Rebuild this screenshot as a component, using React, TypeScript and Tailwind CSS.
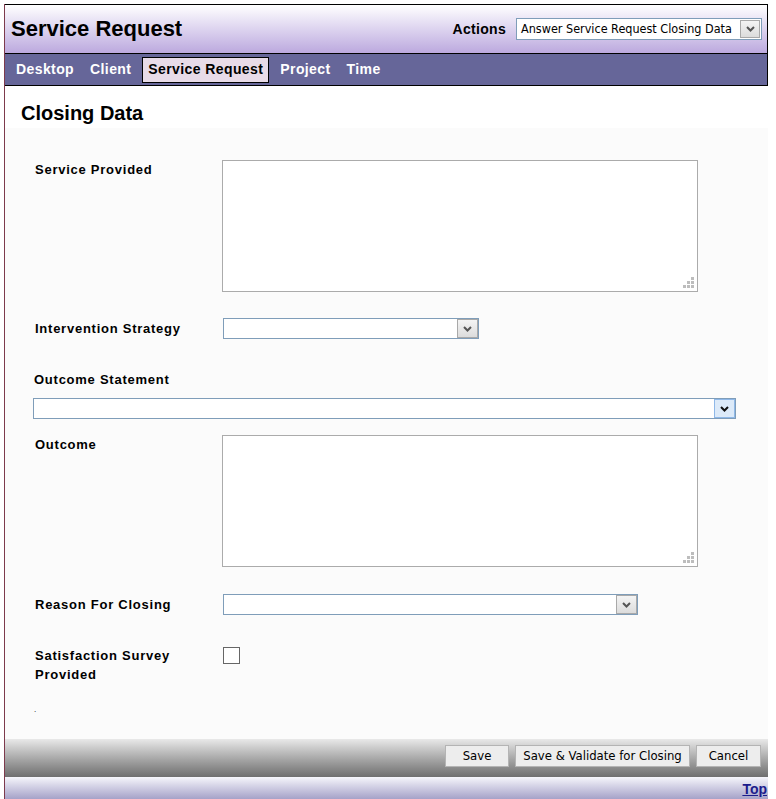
import React from 'react';

const labelCls = "font-['Liberation_Sans',Arial,sans-serif] text-[13px] font-bold leading-[19px] text-black tracking-[0.75px]";
const uiFont = "font-['DejaVu_Sans_Condensed','DejaVu_Sans',sans-serif]";

function Chevron({ dark = false }: { dark?: boolean }) {
    return (
        <svg width="9" height="6" viewBox="0 0 9 6">
            <path d="M1 1 L4.5 4.5 L8 1" fill="none" stroke={dark ? '#111' : '#555'} strokeWidth="2" />
        </svg>
    );
}

function SelectBox({ width, highlight = false }: { width: number; highlight?: boolean }) {
    return (
        <div className="flex h-[21px] border border-[#7f9db9] bg-white" style={{ width }}>
            <div className="flex-1" />
            <div
                className={
                    highlight
                        ? 'flex w-[21px] items-center justify-center border border-[#8fb8e8] bg-[#dceaf9]'
                        : 'flex w-[21px] items-center justify-center border border-[#a9a9a9] bg-gradient-to-b from-[#f4f4f4] to-[#dcdcdc]'
                }
            >
                <Chevron dark={highlight} />
            </div>
        </div>
    );
}

function TextBox() {
    return (
        <div className="relative -ml-px h-[132px] w-[476px] border border-[#ababab] bg-white">
            <svg className="absolute bottom-[3px] right-[3px]" width="11" height="11" viewBox="0 0 11 11">
                <rect x="8" y="0" width="3" height="3" fill="#bdbdbd" />
                <rect x="4" y="4" width="3" height="3" fill="#bdbdbd" />
                <rect x="8" y="4" width="3" height="3" fill="#bdbdbd" />
                <rect x="0" y="8" width="3" height="3" fill="#bdbdbd" />
                <rect x="4" y="8" width="3" height="3" fill="#bdbdbd" />
                <rect x="8" y="8" width="3" height="3" fill="#bdbdbd" />
            </svg>
        </div>
    );
}

function Row({ label, children, className = '' }: { label: React.ReactNode; children: React.ReactNode; className?: string }) {
    return (
        <div className={`flex ${className}`}>
            <div className={`w-[218px] shrink-0 pl-[30px] ${labelCls}`}>{label}</div>
            <div>{children}</div>
        </div>
    );
}

function Btn({ children, w }: { children: React.ReactNode; w: string }) {
    return (
        <div className={`flex h-[22px] items-center justify-center border border-[#b4b4b4] bg-[#ededed] text-[13px] text-black ${uiFont} ${w}`}>
            {children}
        </div>
    );
}

export default function App() {
    const tabs = ['Desktop', 'Client', 'Service Request', 'Project', 'Time'];
    return (
        <div className="h-[799px] w-[776px] overflow-hidden bg-white pl-[4px] pt-[4px] font-['Liberation_Sans',Arial,sans-serif]">
            <div className="flex h-[795px] w-[764px] flex-col border-l border-[#7d3a4c]">
                {/* header */}
                <div className="flex h-[50px] items-center justify-between border-y border-r border-black bg-gradient-to-b from-white to-[#bca9de] pl-[6px] pr-[5px]">
                    <div className="text-[22px] font-bold leading-none text-black">Service Request</div>
                    <div className="flex items-center gap-[10px]">
                        <span className="text-[14px] font-bold tracking-[0.3px] text-black">Actions</span>
                        <div className="flex h-[22px] w-[246px] items-center border border-[#7f9db9] bg-white">
                            <span className={`flex-1 overflow-hidden whitespace-nowrap pl-[4px] text-[12.5px] text-black ${uiFont}`}>Answer Service Request Closing Data</span>
                            <div className="mr-px flex h-[18px] w-[20px] shrink-0 items-center justify-center border border-[#a9a9a9] bg-gradient-to-b from-[#f4f4f4] to-[#dcdcdc]">
                                <Chevron />
                            </div>
                        </div>
                    </div>
                </div>

                {/* nav */}
                <div className="flex h-[32px] items-center border-b border-r border-black bg-[#666699] pl-[3px]">
                    {tabs.map(t =>
                        t === 'Service Request' ? (
                            <div key={t} className="mx-[3px] flex h-[26px] items-center border border-black bg-[#e8dbe8] px-[5px] text-[14px] font-bold tracking-[0.4px] text-black">
                                {t}
                            </div>
                        ) : (
                            <div key={t} className="px-[8px] text-[14px] font-bold tracking-[0.4px] text-white">
                                {t}
                            </div>
                        )
                    )}
                </div>

                {/* content */}
                <div className="flex flex-1 flex-col bg-[#fbfbfb]">
                    <div className="h-[42px] bg-white pl-[16px] pt-[16px] text-[20px] font-bold leading-[22px] text-black">Closing Data</div>

                    <Row label="Service Provided" className="mt-[32px]">
                        <TextBox />
                    </Row>
                    <Row label="Intervention Strategy" className="mt-[26px] items-center">
                        <SelectBox width={256} />
                    </Row>
                    <div className={`mt-[31px] pl-[29px] ${labelCls}`}>Outcome Statement</div>
                    <div className="mt-[9px] pl-[28px]">
                        <SelectBox width={703} highlight />
                    </div>
                    <Row label="Outcome" className="mt-[16px]">
                        <TextBox />
                    </Row>
                    <Row label="Reason For Closing" className="mt-[27px] items-center">
                        <SelectBox width={415} />
                    </Row>
                    <Row label={<>Satisfaction Survey<br />Provided</>} className="mt-[31px]">
                        <div className="mt-[1px] h-[17px] w-[17px] border border-[#666] bg-white" />
                    </Row>
                    <div className="mt-[22px] pl-[29px] text-[8px] leading-none text-black">.</div>
                </div>

                {/* footer */}
                <div className="flex h-[38px] items-start justify-end bg-gradient-to-b from-[#e9e9e9] to-[#6f6f6f] pr-[7px] pt-[6px]">
                    <div className="flex gap-[6px]">
                        <Btn w="w-[64px]">Save</Btn>
                        <Btn w="w-[175px]">Save &amp; Validate for Closing</Btn>
                        <Btn w="w-[65px]">Cancel</Btn>
                    </div>
                </div>
                <div className="flex h-[22px] items-center justify-end bg-gradient-to-b from-[#f6f6fb] to-[#a6a2c8] pr-[1px] pt-[2px]">
                    <a className="text-[14px] font-bold text-[#1c1c8c] underline">Top</a>
                </div>
            </div>
        </div>
    );
}
